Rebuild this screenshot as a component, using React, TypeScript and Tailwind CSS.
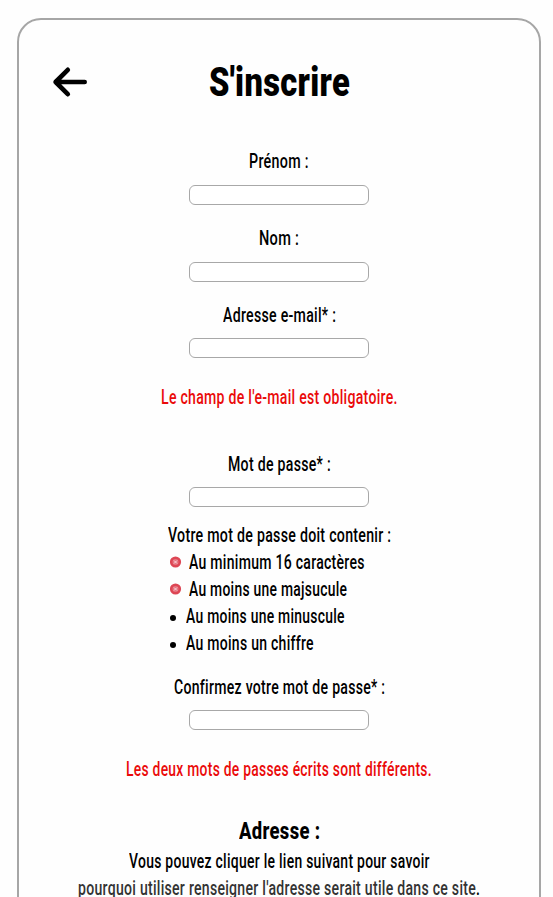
import { useLayoutEffect, useRef, useState, type ReactNode } from "react";

type FitProps = { width: number; className?: string; children: ReactNode };

/** A single line of condensed text, squeezed to a given width. */
function Fit({ width, className = "", children }: FitProps) {
  const ref = useRef<HTMLSpanElement>(null);
  const [scale, setScale] = useState(0.7);
  useLayoutEffect(() => {
    if (ref.current) setScale(width / ref.current.offsetWidth);
  }, [width]);
  return (
    <span className={`flex ${className}`} style={{ width }}>
      <span
        ref={ref}
        className="shrink-0 origin-left whitespace-nowrap"
        style={{ transform: `scaleX(${scale})` }}
      >
        {children}
      </span>
    </span>
  );
}

function Field({ label, width, gap }: { label: string; width: number; gap: string }) {
  return (
    <label className={`flex flex-col items-center ${gap}`}>
      <Fit width={width}>{label}</Fit>
      <input className="h-5 w-[180px] rounded-md border border-[#a8a8a8] bg-white" />
    </label>
  );
}

function Invalid() {
  return (
    <svg className="-mt-px ml-px mr-[7px] h-3 w-3" viewBox="0 0 12 12">
      <circle cx="5.5" cy="6" r="5.6" fill="#dd4654" />
      <circle cx="5.5" cy="6" r="3" fill="#e57480" />
      <path d="M4 4.5l3 3M7 4.5L4 7.5" stroke="#fbdde0" strokeWidth="0.9" />
    </svg>
  );
}

const rules = [
  { text: "Au minimum 16 caractères", width: 176, invalid: true },
  { text: "Au moins une majsucule", width: 158, invalid: true },
  { text: "Au moins une minuscule", width: 159, invalid: false },
  { text: "Au moins un chiffre", width: 128, invalid: false },
];

export default function App() {
  return (
    <div className="h-[897px] overflow-hidden bg-[#fefefe] pl-[17px] pr-3 pt-[18px] font-['Roboto','Liberation_Sans',sans-serif] text-[20px] font-medium leading-[27px] tracking-[0.4px] text-black">
      <main className="flex h-[1000px] flex-col items-center rounded-[24px] border-2 border-[#a6a6a6]">
        <header className="grid h-[128px] w-full shrink-0 grid-cols-[1fr_auto_1fr]">
          <button className="ml-[33px] mt-[44px] h-9 w-9">
            <svg viewBox="0 0 36 36" fill="none" stroke="black" strokeWidth="4.6" strokeLinecap="round" strokeLinejoin="round">
              <path d="M32.7 18H3.6M15.8 5.8L3.6 18L15.8 30.2" />
              <path d="M4 18L8 14.5V21.5Z" fill="black" stroke="none" />
            </svg>
          </button>
          <h1 className="mt-[32px] text-[41px] font-black leading-[60px]">
            <Fit width={141}>S'inscrire</Fit>
          </h1>
          <span />
        </header>

        <form className="flex w-full flex-col items-center">
          <Field label="Prénom :" width={60} gap="gap-[10px]" />
          <div className="h-5" />
          <Field label="Nom :" width={40} gap="gap-[10px]" />
          <div className="h-5" />
          <Field label="Adresse e-mail* :" width={113} gap="gap-[9px]" />
          <p className="mt-[26px] text-[#ea0a0a]">
            <Fit width={237}>Le champ de l'e-mail est obligatoire.</Fit>
          </p>
          <div className="h-10" />
          <Field label="Mot de passe* :" width={103} gap="gap-[9px]" />

          <section className="mt-[15px]">
            <Fit width={223}>Votre mot de passe doit contenir :</Fit>
            <ul>
              {rules.map((rule) => (
                <li key={rule.text} className="flex h-[27px] items-center pl-px">
                  {rule.invalid ? (
                    <Invalid />
                  ) : (
                    <span className="ml-px mr-[10px] mt-0.5 h-1.5 w-1.5 rounded-full bg-black" />
                  )}
                  <Fit width={rule.width}>{rule.text}</Fit>
                </li>
              ))}
            </ul>
          </section>

          <div className="h-[17px]" />
          <Field label="Confirmez votre mot de passe* :" width={211} gap="gap-[9px]" />
          <p className="mt-[26px] text-[#ea0a0a]">
            <Fit width={306}>Les deux mots de passes écrits sont différents.</Fit>
          </p>

          <h2 className="mt-8 text-[23px] font-extrabold leading-[33px]">
            <Fit width={81}>Adresse :</Fit>
          </h2>
          <Fit width={301}>Vous pouvez cliquer le lien suivant pour savoir</Fit>
          <Fit width={402}>
            <a className="text-[#333333]">pourquoi utiliser renseigner l'adresse serait utile dans ce site</a>.
          </Fit>
        </form>
      </main>
    </div>
  );
}
